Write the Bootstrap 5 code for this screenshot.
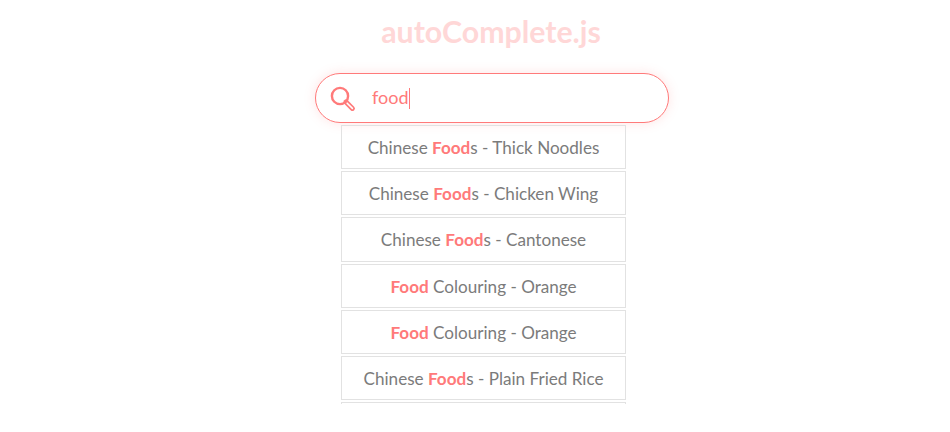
<!DOCTYPE html>
<html lang="en">
<head>
<meta charset="utf-8">
<title>autoComplete.js</title>
<link href="https://cdn.jsdelivr.net/npm/bootstrap@5.3.0/dist/css/bootstrap.min.css" rel="stylesheet">
<style>
body { background:#fff; font-family:"Lato","Liberation Sans",sans-serif; height:432px; overflow:hidden; }
.ac-page { width:950px; }
.ac-title { font-size:30.3px; line-height:40px; font-weight:700; color:#ffd7d7; margin:11px 0 22px 32px; text-align:center; width:918px; }
.ac-search { width:354px; height:50px; margin-left:315px; border:1px solid #ff7a7a; border-radius:25px; box-shadow:0 0 12px rgba(255,122,122,.2); padding:0 0 1px 14px; gap:16px; color:#ff7a7a; font-size:18px; background:#fff; }
.ac-search svg { margin-top:3px; }
.ac-caret { display:inline-block; width:1px; height:21px; margin-left:0; background:#ff7a7a; vertical-align:-5px; }
.ac-results { width:285px; margin:2.02px 0 0 341px; height:279px; overflow:hidden; list-style:none; padding:0; }
.ac-item { height:44.24px; margin-bottom:2px; padding-top:1px; border:1px solid #e2e2e2; color:#7b7b7b; font-size:17.1px; }
.ac-item b { color:#ff7a7a; font-weight:700; }
</style>
</head>
<body>
<div class="ac-page">
  <h1 class="ac-title">autoComplete.js</h1>
  <div class="ac-search d-flex align-items-center">
    <svg width="26" height="26" viewBox="0 0 26 26" fill="none" stroke="#ff7a7a" aria-hidden="true">
      <circle cx="10" cy="10" r="8.1" stroke-width="2.4"/>
      <path d="M16 16l6.4 6.4" stroke-width="5" stroke-linecap="round"/>
      <path d="M17.2 17.2l5.2 5.2" stroke="#fff" stroke-width="1.6" stroke-linecap="round"/>
    </svg>
    <span>food<span class="ac-caret"></span></span>
  </div>
  <ul class="ac-results">
    <li class="ac-item d-flex align-items-center justify-content-center"><span>Chinese <b>Food</b>s - Thick Noodles</span></li>
    <li class="ac-item d-flex align-items-center justify-content-center"><span>Chinese <b>Food</b>s - Chicken Wing</span></li>
    <li class="ac-item d-flex align-items-center justify-content-center"><span>Chinese <b>Food</b>s - Cantonese</span></li>
    <li class="ac-item d-flex align-items-center justify-content-center"><span><b>Food</b> Colouring - Orange</span></li>
    <li class="ac-item d-flex align-items-center justify-content-center"><span><b>Food</b> Colouring - Orange</span></li>
    <li class="ac-item d-flex align-items-center justify-content-center"><span>Chinese <b>Food</b>s - Plain Fried Rice</span></li>
    <li class="ac-item"></li>
  </ul>
</div>
<script src="https://cdn.jsdelivr.net/npm/bootstrap@5.3.0/dist/js/bootstrap.bundle.min.js"></script>
</body>
</html>
